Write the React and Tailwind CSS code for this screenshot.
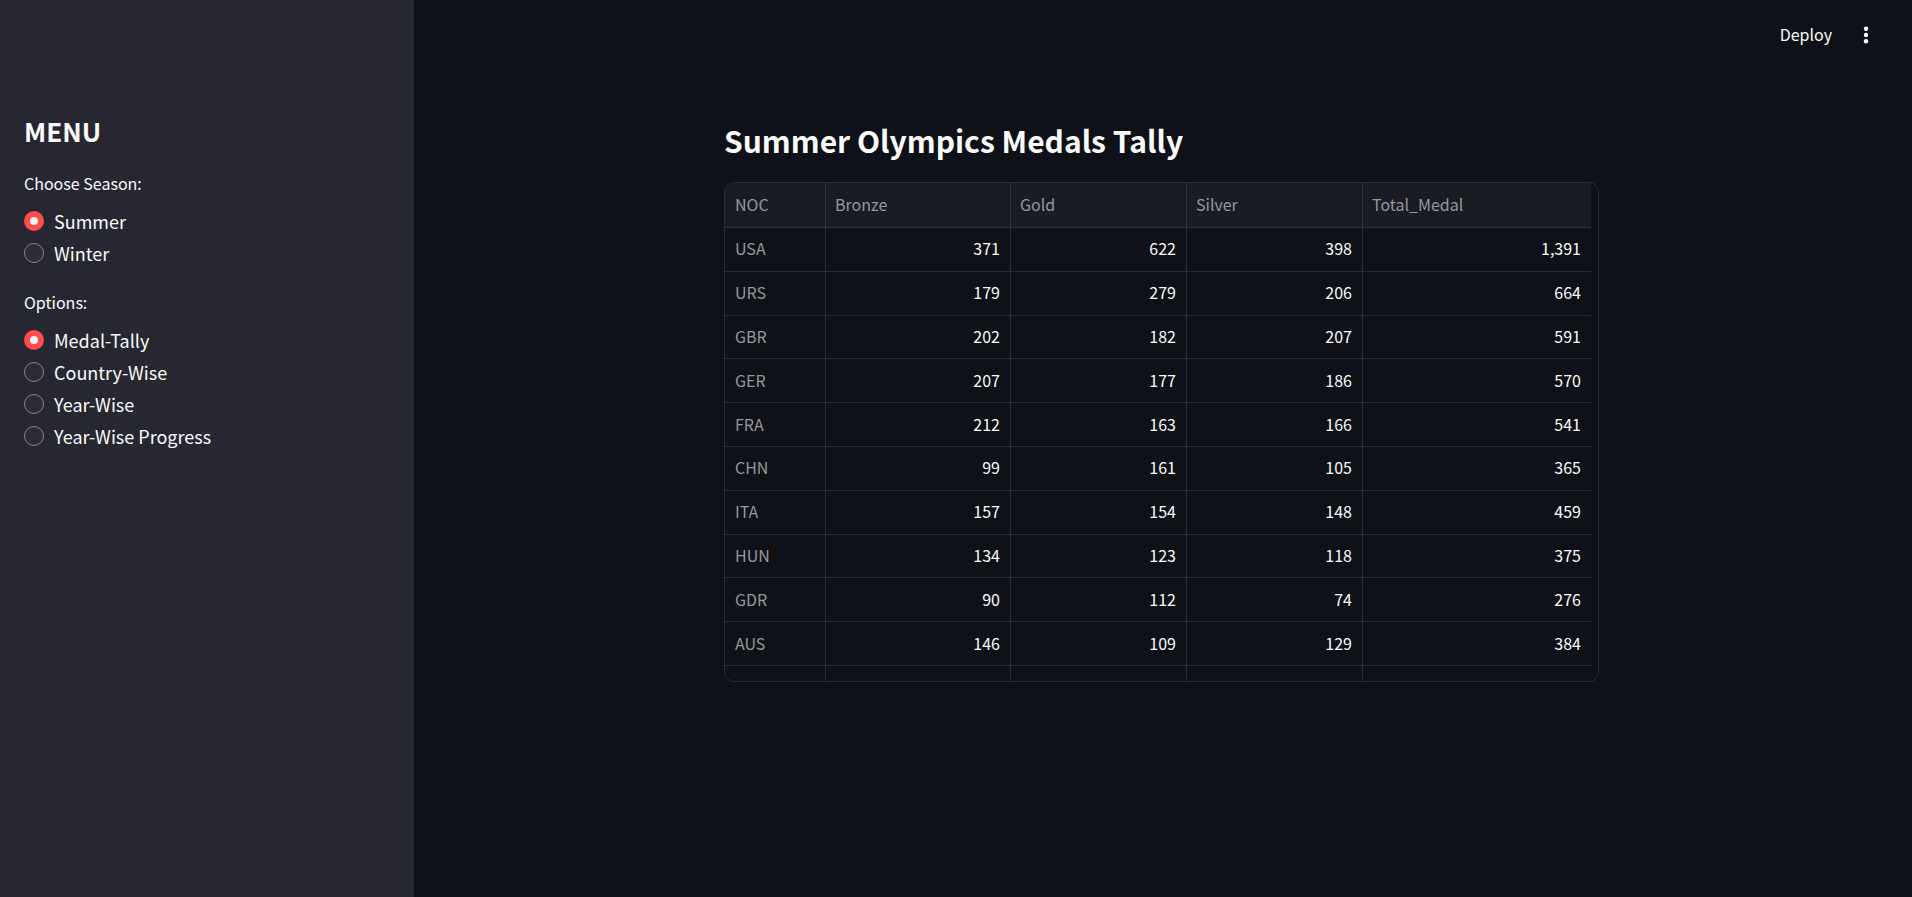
import { useState } from "react";

const COLUMNS = ["Bronze", "Gold", "Silver", "Total_Medal"];

const ROWS = [
  ["USA", 371, 622, 398, 1391],
  ["URS", 179, 279, 206, 664],
  ["GBR", 202, 182, 207, 591],
  ["GER", 207, 177, 186, 570],
  ["FRA", 212, 163, 166, 541],
  ["CHN", 99, 161, 105, 365],
  ["ITA", 157, 154, 148, 459],
  ["HUN", 134, 123, 118, 375],
  ["GDR", 90, 112, 74, 276],
  ["AUS", 146, 109, 129, 384],
];

function RadioGroup({ legend, name, options, value, onChange }) {
  return (
    <fieldset>
      <legend className="mb-2.5 text-base leading-6">{legend}</legend>
      <div className="flex flex-col">
        {options.map((option) => (
          <label key={option} className="flex h-8 cursor-pointer items-center gap-2.5 self-start text-lg leading-8">
            <input
              type="radio"
              name={name}
              checked={value === option}
              onChange={() => onChange(option)}
              className="size-5 shrink-0 cursor-pointer appearance-none rounded-full border border-[#85858c] bg-[#2b2c36] checked:border-6 checked:border-[#ff4b4b] checked:bg-[#f0f2f6]"
            />
            {option}
          </label>
        ))}
      </div>
    </fieldset>
  );
}

function Sidebar() {
  const [season, setSeason] = useState("Summer");
  const [option, setOption] = useState("Medal-Tally");
  return (
    <aside className="w-[414px] shrink-0 bg-[#262730] px-6 pt-[111px]">
      <h2 className="mb-5 text-[26px] leading-10 font-bold">MENU</h2>
      <div className="flex flex-col gap-[21px]">
        <RadioGroup legend="Choose Season:" name="season" options={["Summer", "Winter"]} value={season} onChange={setSeason} />
        <RadioGroup
          legend="Options:"
          name="option"
          options={["Medal-Tally", "Country-Wise", "Year-Wise", "Year-Wise Progress"]}
          value={option}
          onChange={setOption}
        />
      </div>
    </aside>
  );
}

function MedalTable() {
  return (
    <div className="overflow-hidden rounded-[10px] border border-[#292b30] pr-[7px]">
      <table className="h-[498px] w-full table-fixed border-separate border-spacing-0 text-base leading-6">
        <colgroup>
          <col className="w-[101px]" />
          <col className="w-[185px]" />
          <col className="w-[176px]" />
          <col className="w-[176px]" />
          <col />
        </colgroup>
        <thead>
          <tr className="h-[45px] bg-[#1a1c24] text-left text-[#96979b]">
            <th className="border-r border-b border-[#2f3138] px-2.5 pb-0.5 font-normal">NOC</th>
            {COLUMNS.map((column) => (
              <th key={column} className="border-r border-b border-[#2f3138] px-[9px] pb-0.5 font-normal last:border-r-0">
                {column}
              </th>
            ))}
          </tr>
        </thead>
        <tbody>
          {ROWS.map(([noc, ...counts]) => (
            <tr key={noc}>
              <th className="border-r border-b border-[#292b30] px-2.5 pb-0.5 text-left font-normal text-[#96979b]">{noc}</th>
              {counts.map((count, i) => (
                <td key={COLUMNS[i]} className="border-r border-b border-[#292b30] px-2.5 pb-0.5 text-right last:border-r-0">
                  {count.toLocaleString("en-US")}
                </td>
              ))}
            </tr>
          ))}
          <tr className="h-[15px]">
            <td className="border-r border-[#292b30]" />
            {COLUMNS.map((column) => (
              <td key={column} className="border-r border-[#292b30] last:border-r-0" />
            ))}
          </tr>
        </tbody>
      </table>
    </div>
  );
}

export default function App() {
  return (
    <div className="flex min-h-screen bg-[#0e1117] font-['Noto_Sans_CJK_SC','Noto_Sans',sans-serif] text-[#fafafa]">
      <Sidebar />
      <div className="flex min-w-0 flex-1 flex-col">
        <header className="flex h-[70px] items-center justify-end gap-5 pr-8">
          <button type="button" className="cursor-pointer pb-0.5 text-base">
            Deploy
          </button>
          <button type="button" aria-label="Main menu" className="cursor-pointer">
            <svg viewBox="0 0 24 24" className="size-7" fill="currentColor">
              <circle cx="12" cy="6.7" r="1.9" />
              <circle cx="12" cy="12" r="1.9" />
              <circle cx="12" cy="17.3" r="1.9" />
            </svg>
          </button>
        </header>
        <main className="pt-[46px] pr-[3px]">
          <div className="mx-auto max-w-[875px]">
            <h1 className="mb-[18px] text-[30px] leading-12 font-bold">Summer Olympics Medals Tally</h1>
            <MedalTable />
          </div>
        </main>
      </div>
    </div>
  );
}
